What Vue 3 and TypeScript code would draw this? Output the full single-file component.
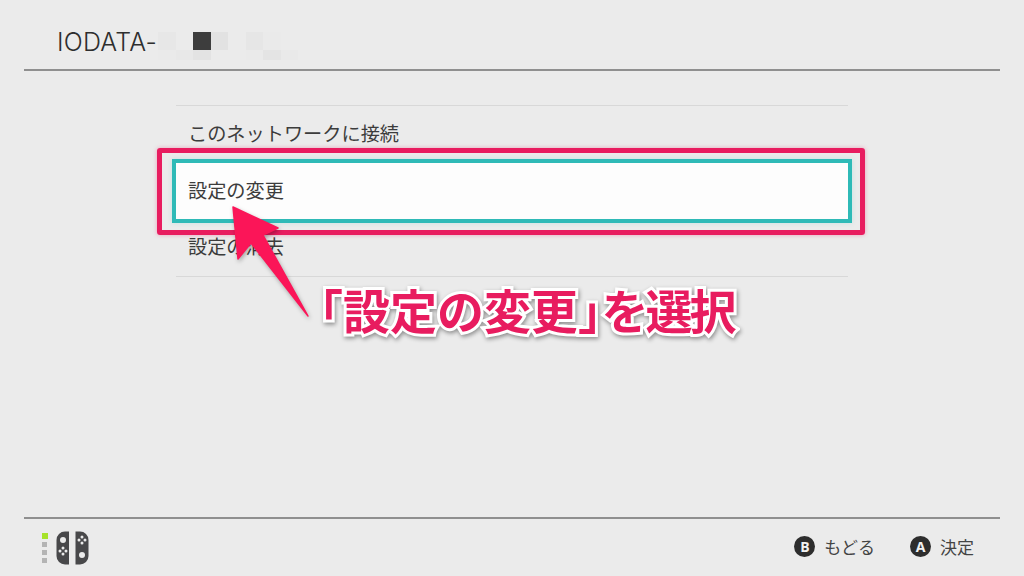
<template>
  <div class="screen">
    <header class="top">
      <h1 class="title">IODATA-</h1>
      <div class="mosaic">
        <i
          v-for="(c, i) in mosaic"
          :key="i"
          :style="{ background: c }"
        ></i>
      </div>
    </header>

    <main class="content">
      <ul class="menu">
        <li class="row">このネットワークに接続</li>
        <li class="row selected">設定の変更</li>
        <li class="row">設定の消去</li>
      </ul>
    </main>

    <footer class="bottom">
      <div class="controller">
        <div class="leds">
          <span class="led on"></span>
          <span class="led"></span>
          <span class="led"></span>
          <span class="led"></span>
        </div>
        <svg width="33" height="34" viewBox="0 0 33 34">
          <path d="M13 0.5H9A8.5 8.5 0 0 0 0.5 9V25A8.5 8.5 0 0 0 9 33.500H13Z" fill="#48484a" />
          <path d="M19.500 0.500H24A8.500 8.500 0 0 1 32.500 9V25A8.500 8.500 0 0 1 24 33.500H19.500Z" fill="#48484a" />
          <circle cx="7" cy="9" r="3" fill="#ebebeb" />
          <circle cx="26" cy="24" r="3" fill="#ebebeb" />
          <g fill="#ebebeb">
            <circle cx="7" cy="17" r="1.500" />
            <circle cx="7" cy="23" r="1.500" />
            <circle cx="4" cy="20" r="1.500" />
            <circle cx="10" cy="20" r="1.500" />
            <circle cx="26" cy="6" r="1.500" />
            <circle cx="26" cy="12" r="1.500" />
            <circle cx="23" cy="9" r="1.500" />
            <circle cx="29" cy="9" r="1.500" />
          </g>
        </svg>
      </div>
      <div class="hints">
        <span class="hint"><b class="btn">B</b>もどる</span>
        <span class="hint"><b class="btn">A</b>決定</span>
      </div>
    </footer>

    <!-- annotation drawn over the screenshot -->
    <div class="note-box"></div>
    <svg class="note-arrow" width="1024" height="576" viewBox="0 0 1024 576">
      <polygon points="233,207 278,228 263,235 308,316 251,243 238,259" fill="#fb1558" stroke="#fb1558" stroke-width="1.500" stroke-linejoin="round" />
    </svg>
    <div class="note-text">「設定の変更<span class="half">」</span><span class="tail">を選択</span></div>
  </div>
</template>

<script setup lang="ts">
const L0 = '#ebebeb'
const mosaic: string[] = [
  '#e7e7e7', L0, '#3d3d3d', '#e2e2e2', L0, '#e6e6e6', '#eaeaea', L0,
  '#eaeaea', '#e8e8e8', '#e3e3e3', L0, L0, '#eaeaea', '#e4e4e4', '#e9e9e9'
]
</script>

<style>
html, body {
  margin: 0;
  background: #ebebeb;
}
</style>

<style scoped>
.screen {
  position: relative;
  width: 1024px;
  height: 576px;
  overflow: hidden;
  display: flex;
  flex-direction: column;
  background: #ebebeb;
  color: #3c3c3c;
  font-family: "Noto Sans CJK JP", "Noto Sans", sans-serif;
}
.top {
  height: 69px;
  margin: 0 24px;
  padding-left: 33px;
  display: flex;
  align-items: flex-start;
  border-bottom: 2px solid #8f8f8f;
}
.title {
  width: 101px;
  margin: 26px 0 0;
  font: 300 25px/32px "Inter", sans-serif;
  letter-spacing: 0.2px;
  white-space: nowrap;
  color: #2e2e2e;
}
.mosaic {
  margin: 32px 0 0 0;
  display: grid;
  grid-template-columns: repeat(8, 17.500px);
  grid-template-rows: 17.500px 10px;
}
.content {
  flex: 1;
  padding-top: 34px;
}
.menu {
  list-style: none;
  margin: 0 auto;
  padding: 0;
  width: 672px;
  border-top: 1px solid #d8d8d8;
  border-bottom: 1px solid #d8d8d8;
}
.row {
  height: 56.500px;
  padding-left: 12px;
  padding-bottom: 2px;
  box-sizing: border-box;
  display: flex;
  align-items: center;
  font-size: 19.200px;
}
.row.selected {
  background: #fdfdfd;
  outline: 4px solid #2fbab7;
  box-shadow: 0 0 5px 4px rgba(47, 186, 183, 0.18);
}
.bottom {
  height: 57px;
  margin: 0 24px;
  display: flex;
  align-items: center;
  justify-content: space-between;
  border-top: 2px solid #8f8f8f;
}
.controller {
  margin-left: 18px;
  display: flex;
  gap: 8px;
}
.leds {
  display: flex;
  flex-direction: column;
  gap: 3px;
  padding-top: 2px;
}
.led {
  width: 5px;
  height: 5px;
  background: #b4b4b4;
}
.led.on {
  width: 6px;
  height: 6px;
  background: #a6e22a;
}
.hints {
  display: flex;
  gap: 35px;
  margin-right: 26px;
  padding-bottom: 2px;
}
.hint {
  display: flex;
  align-items: center;
  gap: 9px;
  font-size: 17px;
  color: #444;
}
.btn {
  width: 21px;
  height: 21px;
  border-radius: 50%;
  background: #2d2d2d;
  color: #f2f2f2;
  display: flex;
  align-items: center;
  justify-content: center;
  font: 700 14px/1 "Open Sans", sans-serif;
}
.note-box {
  position: absolute;
  left: 157px;
  top: 148px;
  width: 698px;
  height: 77px;
  border: 5px solid #e81c5f;
  border-radius: 3px;
  box-shadow: 0 0 4px rgba(232, 28, 95, 0.35);
}
.note-arrow {
  position: absolute;
  left: 0;
  top: 0;
  filter: drop-shadow(1px 2px 2px rgba(0, 0, 0, 0.3));
}
.note-text {
  position: absolute;
  left: 296px;
  top: 276px;
  font-size: 47px;
  font-weight: 700;
  line-height: 66px;
  white-space: nowrap;
  color: #e81c5f;
  -webkit-text-stroke: 6px #fff;
  paint-order: stroke fill;
  filter: drop-shadow(1px 2px 2px rgba(0, 0, 0, 0.4));
}
.half {
  font-feature-settings: "halt";
}
.tail {
  letter-spacing: -3px;
}
</style>
